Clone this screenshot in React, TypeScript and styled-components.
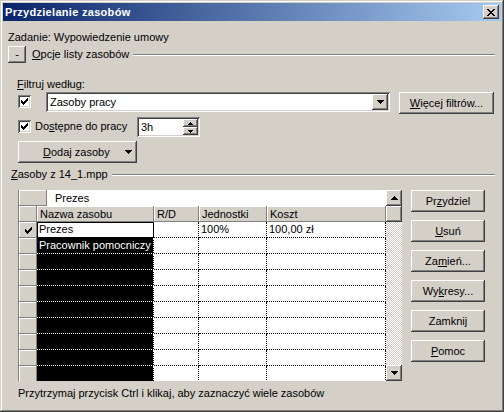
import React from 'react';
import styled, { createGlobalStyle, css } from 'styled-components';

const GlobalStyle = createGlobalStyle`
  html, body {
    margin: 0;
    padding: 0;
    background: #d4d0c8;
  }
  body {
    font-family: 'Liberation Sans', Arial, sans-serif;
    font-size: 11px;
    color: #000;
  }
  * {
    box-sizing: border-box;
  }
`;

const raised = css`
  background: #d4d0c8;
  box-shadow: inset -1px -1px #404040, inset 1px 1px #fff, inset -2px -2px #808080, inset 2px 2px #d4d0c8;
`;

const sunken = css`
  background: #fff;
  box-shadow: inset 1px 1px #808080, inset -1px -1px #fff, inset 2px 2px #404040, inset -2px -2px #d4d0c8;
`;

// pixel pictures for the tiny classic glyphs
const CHECK = ['......#', '.....##', '#...###', '##.###.', '#####..', '.###...', '..#....'];
const CLOSE_X = ['##....##', '.##..##.', '..####..', '...##...', '..####..', '.##..##.', '##....##'];
const ARROW_DOWN = ['#######', '.#####.', '..###..', '...#...'];
const ARROW_UP = [...ARROW_DOWN].reverse();
const SPIN_DOWN = ['#####', '.###.', '..#..'];
const SPIN_UP = [...SPIN_DOWN].reverse();

function PixelIcon({ rows, color = '#000' }: { rows: string[]; color?: string }) {
    const w = rows[0].length;
    const h = rows.length;
    return (
        <svg width={w} height={h} viewBox={`0 0 ${w} ${h}`} shapeRendering='crispEdges'>
            {rows.flatMap((row, y) =>
                row.split('').map((c, x) => (c === '#' ? <rect key={`${x}-${y}`} x={x} y={y} width={1} height={1} fill={color} /> : null))
            )}
        </svg>
    );
}

const Window = styled.div`
    width: 504px;
    height: 412px;
    padding: 3px;
    display: flex;
    flex-direction: column;
    background: #d4d0c8;
    box-shadow: inset -1px -1px #404040, inset 1px 1px #d4d0c8, inset -2px -2px #808080, inset 2px 2px #fff;
    line-height: 13px;
`;

const TitleBar = styled.div`
    height: 18px;
    flex-shrink: 0;
    display: flex;
    align-items: center;
    justify-content: space-between;
    padding: 0 2px 0 2px;
    background: linear-gradient(to right, #0a246a, #a6caf0);
`;

const TitleText = styled.span`
    color: #fff;
    font-weight: bold;
    letter-spacing: 0.3px;
`;

const SmallButton = styled.div<{ $w: number; $h: number }>`
    ${raised};
    width: ${(p) => p.$w}px;
    height: ${(p) => p.$h}px;
    flex-shrink: 0;
    display: flex;
    align-items: center;
    justify-content: center;
`;

const Content = styled.div`
    flex: 1;
    display: flex;
    flex-direction: column;
    padding: 9px 6px 0 5px;
`;

const TextLine = styled.div<{ $top?: number; $left?: number }>`
    height: 13px;
    margin-top: ${(p) => p.$top ?? 0}px;
    margin-left: ${(p) => p.$left ?? 0}px;
    white-space: nowrap;
`;

const SectionHeader = styled.div<{ $top: number; $left?: number }>`
    display: flex;
    align-items: center;
    height: 17px;
    margin-top: ${(p) => p.$top}px;
    margin-left: ${(p) => p.$left ?? 0}px;
`;

const ToggleButton = styled.div`
    ${raised};
    width: 18px;
    height: 17px;
    display: flex;
    align-items: center;
    justify-content: center;
    padding-bottom: 1px;
`;

const SectionLabel = styled.span<{ $gap: number }>`
    margin-left: ${(p) => p.$gap}px;
    white-space: nowrap;
`;

const Rule = styled.div`
    flex: 1;
    height: 2px;
    margin-left: 4px;
    border-top: 1px solid #808080;
    border-bottom: 1px solid #fff;
`;

const Options = styled.div`
    display: flex;
    flex-direction: column;
    align-items: flex-start;
    padding-left: 9px;
`;

const FieldRow = styled.div<{ $top: number; $h: number }>`
    display: flex;
    align-items: flex-start;
    margin-top: ${(p) => p.$top}px;
    height: ${(p) => p.$h}px;
`;

const CheckBox = styled.div`
    ${sunken};
    width: 13px;
    height: 13px;
    margin: 3px 0 0 1px;
    flex-shrink: 0;
    display: flex;
    align-items: center;
    justify-content: center;
`;

const ComboBox = styled.div`
    ${sunken};
    width: 344px;
    height: 20px;
    margin-left: 15px;
    padding: 2px;
    display: flex;
    align-items: center;
`;

const FieldText = styled.span`
    flex: 1;
    padding-left: 2px;
    line-height: 16px;
    white-space: nowrap;
`;

const CheckLabel = styled.span`
    width: 102px;
    margin: 3px 0 0 4px;
    white-space: nowrap;
`;

const SpinBox = styled.div`
    ${sunken};
    width: 63px;
    height: 20px;
    padding: 2px;
    display: flex;
`;

const SpinButtons = styled.div`
    display: flex;
    flex-direction: column;
`;

const PushButton = styled.div<{ $w: number; $left?: number; $top?: number }>`
    ${raised};
    width: ${(p) => p.$w}px;
    height: 22px;
    margin-left: ${(p) => p.$left ?? 0}px;
    margin-top: ${(p) => p.$top ?? 0}px;
    flex-shrink: 0;
    display: flex;
    align-items: center;
    justify-content: center;
    white-space: nowrap;
`;

const MenuButton = styled(PushButton)`
    justify-content: flex-start;
    padding-left: 25px;

    svg {
        margin-left: 15px;
    }
`;

const Main = styled.div`
    display: flex;
    align-items: flex-start;
    margin-top: 7px;
`;

const GridFrame = styled.div`
    margin-left: 10px;
    width: 384px;
    height: 191px;
    display: flex;
    border-left: 1px solid #808080;
`;

const GridBody = styled.div`
    width: 367px;
    display: flex;
    flex-direction: column;
    background: #fff;
    overflow: hidden;
`;

const GridRow = styled.div`
    display: flex;
    height: 16px;
    flex-shrink: 0;
`;

const bevel = css`
    background: #d4d0c8;
    box-shadow: inset -1px -1px #808080, inset 1px 1px #fff;
`;

const EntryGutter = styled.div`
    ${bevel};
    width: 28px;
`;

const EntryField = styled.div`
    flex: 1;
    padding-left: 8px;
    line-height: 16px;
    background: #fff;
`;

const HeaderCell = styled.div<{ $w?: number }>`
    ${bevel};
    ${(p) => (p.$w ? `width: ${p.$w}px;` : 'flex: 1;')}
    padding-left: 3px;
    line-height: 16px;
    white-space: nowrap;
`;

const RowHeader = styled.div`
    ${bevel};
    width: 18px;
    display: flex;
    align-items: center;
    justify-content: center;
`;

const DataCell = styled.div<{ $w?: number; $selected?: boolean; $active?: boolean }>`
    ${(p) => (p.$w ? `width: ${p.$w}px;` : 'flex: 1;')}
    padding-left: 2px;
    line-height: 15px;
    white-space: nowrap;
    overflow: hidden;
    border-right: 1px dotted #000;
    border-bottom: 1px dotted #000;
    background: #fff;
    color: #000;

    ${(p) =>
        p.$selected &&
        css`
            background: #000;
            color: #fff;
            border-color: #fff;
        `}

    ${(p) =>
        p.$active &&
        css`
            background: #fff;
            color: #000;
            border-right: 1px solid #000;
            border-bottom: 1px solid #000;
            box-shadow: inset 1px 1px #000;
        `}
`;

const ScrollBar = styled.div`
    width: 16px;
    display: flex;
    flex-direction: column;
`;

const ScrollTrack = styled.div`
    flex: 1;
    background: repeating-conic-gradient(#d4d0c8 0 25%, #fff 0 50%) 0 0 / 2px 2px;
`;

const ButtonColumn = styled.div`
    margin-left: 9px;
    display: flex;
    flex-direction: column;
    gap: 8px;
`;

const Key = styled.u`
    text-decoration: underline;
`;

type Row = { check?: boolean; name?: string; rd?: string; units?: string; cost?: string; active?: boolean };

const rows: Row[] = [
    { check: true, name: 'Prezes', units: '100%', cost: '100,00 zł', active: true },
    { name: 'Pracownik pomocniczy' },
    {}, {}, {}, {}, {}, {}, {}, {},
];

const COLS = { head: 18, name: 117, rd: 45, units: 68 };

export default function App() {
    return (
        <>
            <GlobalStyle />
            <Window>
                <TitleBar>
                    <TitleText>Przydzielanie zasobów</TitleText>
                    <SmallButton $w={16} $h={14}>
                        <PixelIcon rows={CLOSE_X} />
                    </SmallButton>
                </TitleBar>

                <Content>
                    <TextLine $top={1}>Zadanie: Wypowiedzenie umowy</TextLine>

                    <SectionHeader $top={2}>
                        <ToggleButton>-</ToggleButton>
                        <SectionLabel $gap={6}>
                            <Key>O</Key>pcje listy zasobów
                        </SectionLabel>
                        <Rule />
                    </SectionHeader>

                    <Options>
                        <TextLine $top={15}>
                            <Key>F</Key>iltruj według:
                        </TextLine>
                        <FieldRow $top={1} $h={22}>
                            <CheckBox>
                                <PixelIcon rows={CHECK} />
                            </CheckBox>
                            <ComboBox>
                                <FieldText>Zasoby pracy</FieldText>
                                <SmallButton $w={16} $h={16}>
                                    <PixelIcon rows={ARROW_DOWN} />
                                </SmallButton>
                            </ComboBox>
                            <PushButton $w={95} $left={9}>
                                <Key>W</Key>ięcej filtrów...
                            </PushButton>
                        </FieldRow>
                        <FieldRow $top={3} $h={20}>
                            <CheckBox>
                                <PixelIcon rows={CHECK} />
                            </CheckBox>
                            <CheckLabel>
                                Do<Key>s</Key>tępne do pracy
                            </CheckLabel>
                            <SpinBox>
                                <FieldText>3h</FieldText>
                                <SpinButtons>
                                    <SmallButton $w={15} $h={8}>
                                        <PixelIcon rows={SPIN_UP} />
                                    </SmallButton>
                                    <SmallButton $w={15} $h={8}>
                                        <PixelIcon rows={SPIN_DOWN} />
                                    </SmallButton>
                                </SpinButtons>
                            </SpinBox>
                        </FieldRow>
                        <MenuButton $w={119} $left={1} $top={4}>
                            <span>
                                <Key>D</Key>odaj zasoby
                            </span>
                            <PixelIcon rows={ARROW_DOWN} />
                        </MenuButton>
                    </Options>

                    <SectionHeader $top={3} $left={3}>
                        <SectionLabel $gap={0}>
                            <Key>Z</Key>asoby z 14_1.mpp
                        </SectionLabel>
                        <Rule />
                    </SectionHeader>

                    <Main>
                        <GridFrame>
                            <GridBody>
                                <GridRow>
                                    <EntryGutter />
                                    <EntryField>Prezes</EntryField>
                                </GridRow>
                                <GridRow>
                                    <HeaderCell $w={COLS.head} />
                                    <HeaderCell $w={COLS.name}>Nazwa zasobu</HeaderCell>
                                    <HeaderCell $w={COLS.rd}>R/D</HeaderCell>
                                    <HeaderCell $w={COLS.units}>Jednostki</HeaderCell>
                                    <HeaderCell>Koszt</HeaderCell>
                                </GridRow>
                                {rows.map((r, i) => (
                                    <GridRow key={i}>
                                        <RowHeader>{r.check && <PixelIcon rows={CHECK} />}</RowHeader>
                                        <DataCell $w={COLS.name} $selected $active={r.active}>
                                            {r.name}
                                        </DataCell>
                                        <DataCell $w={COLS.rd}>{r.rd}</DataCell>
                                        <DataCell $w={COLS.units}>{r.units}</DataCell>
                                        <DataCell>{r.cost}</DataCell>
                                    </GridRow>
                                ))}
                            </GridBody>
                            <ScrollBar>
                                <SmallButton $w={16} $h={16}>
                                    <PixelIcon rows={ARROW_UP} />
                                </SmallButton>
                                <SmallButton $w={16} $h={16} />
                                <ScrollTrack />
                                <SmallButton $w={16} $h={16}>
                                    <PixelIcon rows={ARROW_DOWN} />
                                </SmallButton>
                            </ScrollBar>
                        </GridFrame>

                        <ButtonColumn>
                            <PushButton $w={74}>
                                Pr<Key>z</Key>ydziel
                            </PushButton>
                            <PushButton $w={74}>
                                <Key>U</Key>suń
                            </PushButton>
                            <PushButton $w={74}>
                                Za<Key>m</Key>ień...
                            </PushButton>
                            <PushButton $w={74}>
                                Wy<Key>k</Key>resy...
                            </PushButton>
                            <PushButton $w={74}>Zamknij</PushButton>
                            <PushButton $w={74}>
                                <Key>P</Key>omoc
                            </PushButton>
                        </ButtonColumn>
                    </Main>

                    <TextLine $top={6} $left={10}>
                        Przytrzymaj przycisk Ctrl i klikaj, aby zaznaczyć wiele zasobów
                    </TextLine>
                </Content>
            </Window>
        </>
    );
}
